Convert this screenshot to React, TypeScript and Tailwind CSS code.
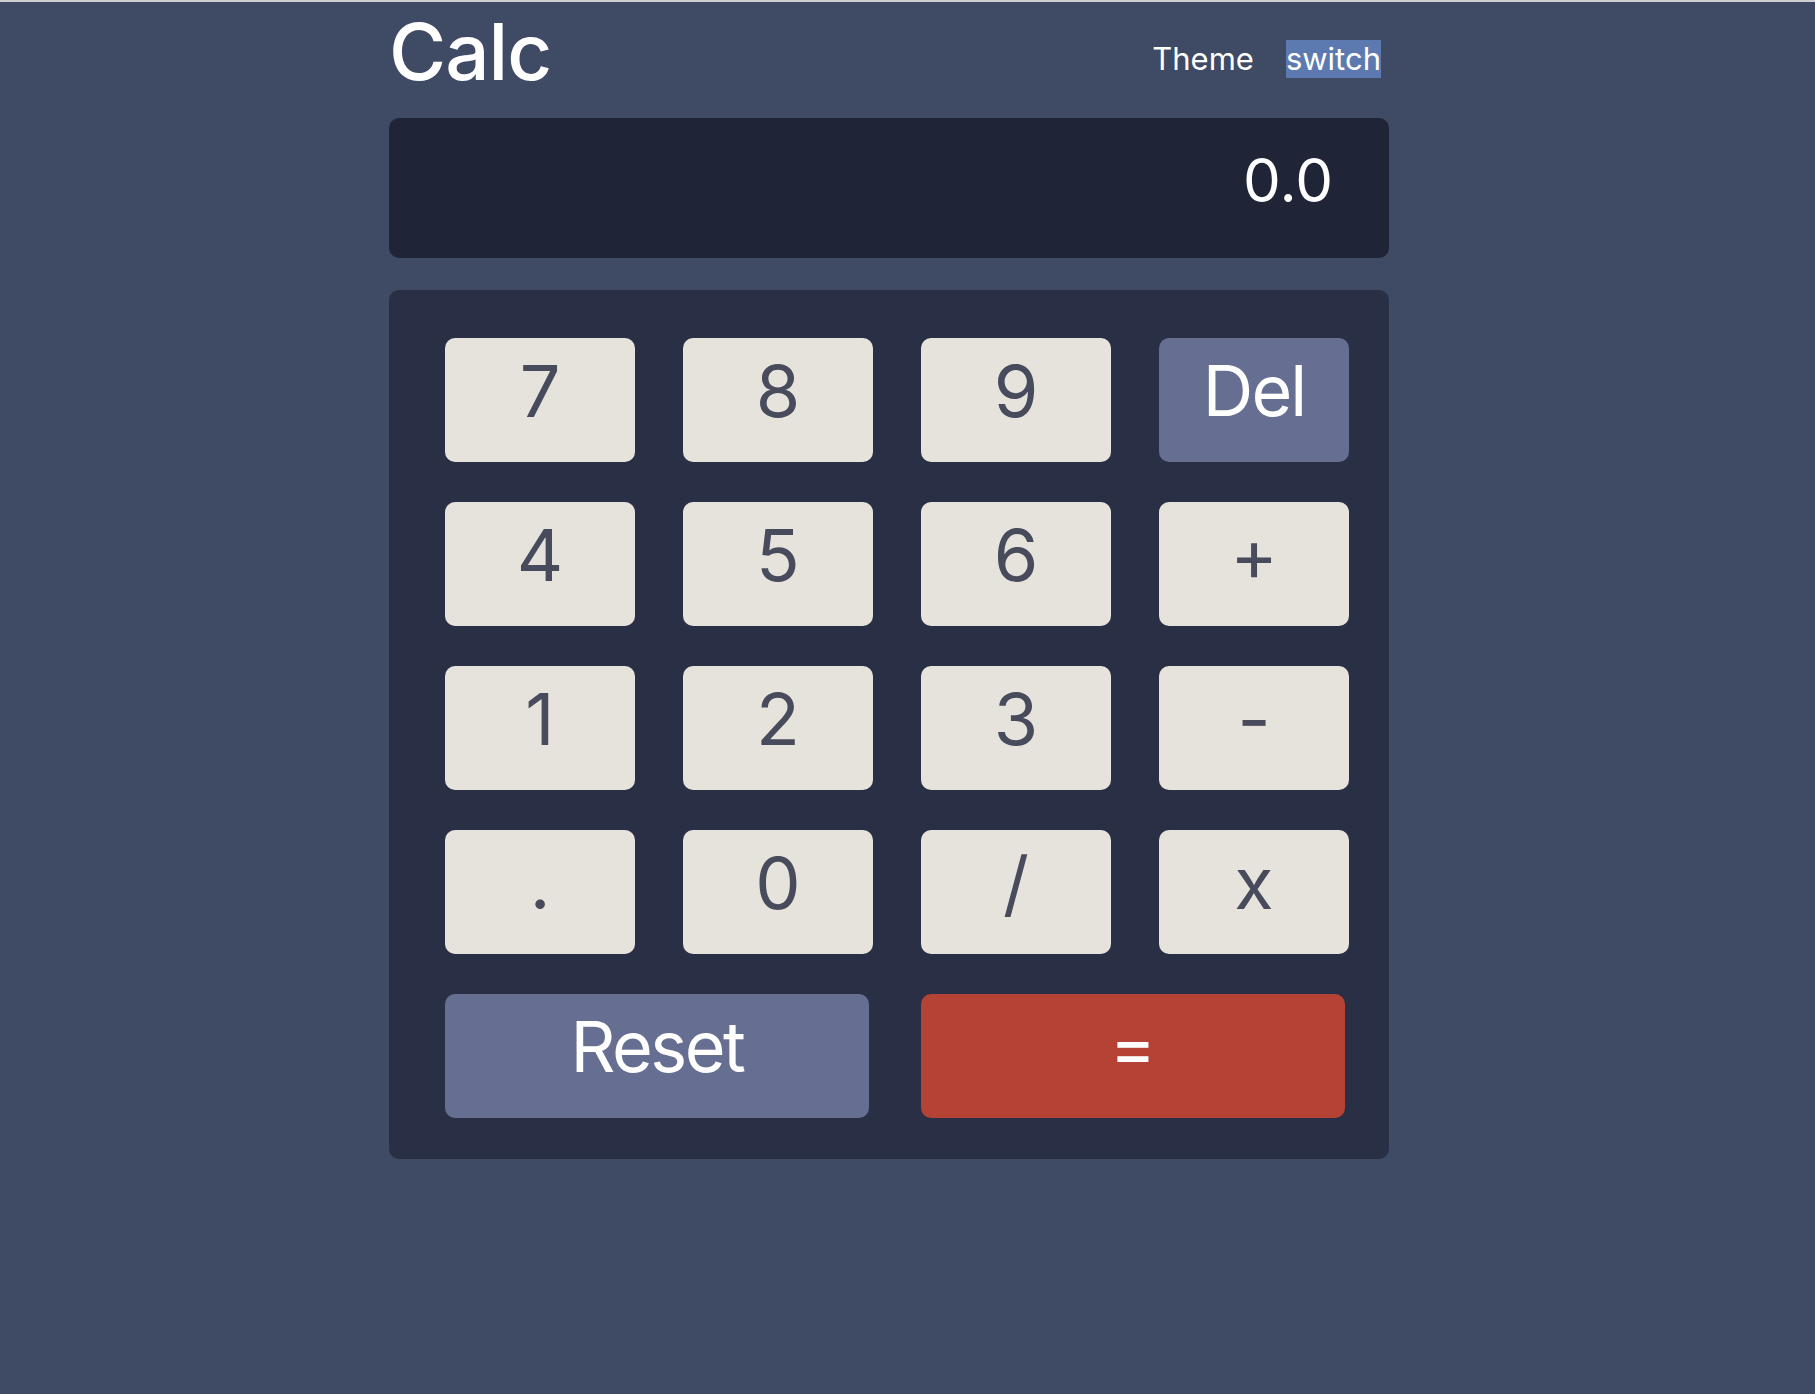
import React from "react";

const keys = ["7", "8", "9", "Del", "4", "5", "6", "+", "1", "2", "3", "-", ".", "0", "/", "x"];

function Key({ label }: { label: string }) {
  const isDel = label === "Del";
  return (
    <button
      className={
        isDel
          ? "h-[124px] rounded-[10px] bg-[#666e91] text-white text-[70px] leading-none tracking-[-2px] flex items-center justify-center pb-[18px]"
          : "h-[124px] rounded-[10px] bg-[#e6e2dc] text-[#474b5c] text-[72px] leading-none flex items-center justify-center pb-[18px]"
      }
    >
      {label}
    </button>
  );
}

export default function App() {
  return (
    <div className="min-h-screen bg-[#3f4a64] text-white font-['Inter','Liberation_Sans',sans-serif]">
      <div className="h-[2px] bg-[#cfcfcf]" />
      <div className="ml-[389px] w-[1000px]">
        <header className="flex justify-between items-start h-[116px]">
          <h1 className="text-[78px] leading-none mt-[11px] tracking-[-1px] font-medium">Calc</h1>
          <div className="mt-[38px] mr-[8px] text-[31px] leading-[38px] flex gap-[32px]">
            <span>Theme</span>
            <span className="bg-[#5c79b0]">switch</span>
          </div>
        </header>

        <div className="h-[140px] rounded-[10px] bg-[#1f2436] flex items-center justify-end pr-[56px] pb-[16px] text-[60px] leading-none">
          0.0
        </div>

        <div className="mt-[32px] rounded-[10px] bg-[#292f44] pt-[48px] pl-[56px] pr-[40px] pb-[41px]">
          <div className="grid grid-cols-[repeat(4,190px)] gap-x-[48px] gap-y-[40px]">
            {keys.map((k) => (
              <Key key={k} label={k} />
            ))}
            <button className="col-span-2 w-[424px] h-[124px] rounded-[10px] bg-[#666e91] text-white text-[70px] leading-none tracking-[-2.5px] flex items-center justify-center pb-[18px]">
              Reset
            </button>
            <button className="col-span-2 w-[424px] h-[124px] rounded-[10px] bg-[#b44335] text-white text-[70px] leading-none flex items-center justify-center pb-[18px]">
              =
            </button>
          </div>
        </div>
      </div>
    </div>
  );
}
